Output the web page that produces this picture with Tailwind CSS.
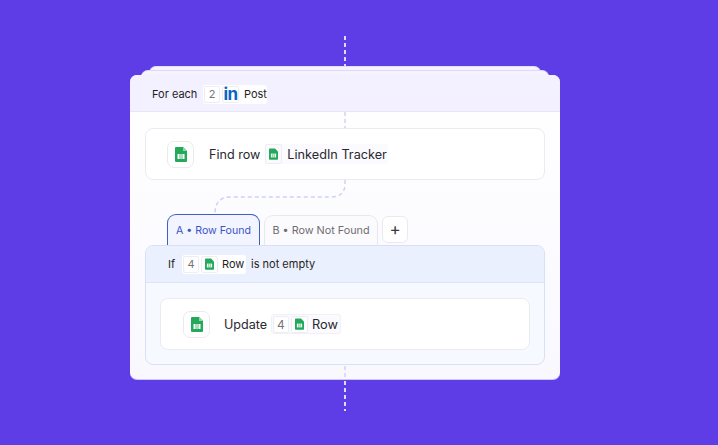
<!DOCTYPE html>
<html>
<head>
<script src="https://cdn.jsdelivr.net/npm/@tailwindcss/browser@4"></script>
</head>
<body class="m-0">
<div class="relative w-[718px] h-[445px] overflow-hidden bg-[#5f3de6] font-['Inter','Noto_Sans',sans-serif] text-[#1f1e24]">
  <svg class="absolute left-0 top-0 z-10" width="718" height="445" fill="none">
    <path d="M345 36V66" stroke="#dcdbfa" stroke-width="2" stroke-dasharray="4 3"/>
    <path d="M345 112V128" stroke="#cfd4f4" stroke-width="1.5" stroke-dasharray="4 3"/>
    <path d="M345 180V184Q345 197 331 197H230Q215 197 215 214" stroke="#cdd3f2" stroke-width="1.5" stroke-dasharray="4 3"/>
    <path d="M345 366V380" stroke="#cfd4f4" stroke-width="1.5" stroke-dasharray="4 3"/>
    <path d="M345 381V411" stroke="#dcdbfa" stroke-width="2" stroke-dasharray="4 3"/>
  </svg>
  <div class="absolute left-[149px] top-[66px] w-[392px] h-[20px] rounded-t-[7px] bg-[#f6f3ff] border-t border-[#e4dcfb]"></div>
  <div class="absolute left-[141px] top-[70px] w-[408px] h-[20px] rounded-t-[7px] bg-[#f6f3ff] border-t border-[#e0d8fa]"></div>
  <div class="absolute left-[130px] top-[75px] w-[430px] h-[305px] rounded-[7px] bg-gradient-to-b from-white to-[#f9f8ff] overflow-hidden flex flex-col border-b border-[#cfc6f5]">
    <div class="h-[37px] shrink-0 bg-[#f3f0ff] border-b border-[#e8e4fa] flex items-center pl-[22px] pt-[2px] text-[11px]">
      <span class="w-[51px]">For each</span>
      <span class="h-[19px] w-[64px] rounded-[3px] bg-white flex items-center pl-[1px]">
        <span class="w-[16px] h-[17px] border border-[#eeeef2] rounded-[2px] text-center text-[#77737a] leading-[15px]">2</span>
        <span class="w-[17px] h-[17px] ml-[2px] flex items-center justify-center rounded-[2px] border border-[#eeeef2] text-[#0a66c2] font-bold text-[17px] leading-none tracking-[-0.5px]">in</span>
        <span class="ml-[5px]">Post</span>
      </span>
    </div>
    <div class="flex flex-col px-[15px] pt-[16px]">
      <div class="h-[52px] rounded-[8px] bg-white border border-[#ebeaf0] flex items-center pl-[21px] shrink-0">
        <span class="w-[27px] h-[27px] rounded-[7px] border border-[#ecebe8] flex items-center justify-center">
          <svg width="12" height="15" viewBox="0 0 12 15"><path d="M1 0H8L12 4V14Q12 15 11 15H1Q0 15 0 14V1Q0 0 1 0Z" fill="#24a85a"/><path d="M8 0L12 4H8Z" fill="#8fd8a8"/><rect x="2.5" y="7" width="7" height="5" fill="#fff"/><path d="M5 7V12M7 7V12" stroke="#24a85a" stroke-width=".8"/></svg>
        </span>
        <span class="ml-[15px] pt-[2px] text-[12.6px] text-[#2a292f]">Find row</span>
        <span class="ml-[5px] h-[20px] w-[123px] rounded-[3px] bg-[#fafaff] flex items-center">
          <span class="w-[17px] h-[20px] rounded-[2px] border border-[#eeeef2] flex items-center justify-center">
            <svg width="9" height="12" viewBox="0 0 12 15"><path d="M1 0H8L12 4V14Q12 15 11 15H1Q0 15 0 14V1Q0 0 1 0Z" fill="#24a85a"/><rect x="2.5" y="7" width="7" height="5" fill="#fff"/><path d="M5 7V12M7 7V12" stroke="#24a85a" stroke-width=".8"/></svg>
          </span>
          <span class="ml-[5px] pt-[2px] text-[12.7px] text-[#2a292f]">LinkedIn Tracker</span>
        </span>
      </div>
      <div class="mt-[34px] h-[31px] pl-[22px] flex items-end gap-[4px] shrink-0">
        <span class="w-[93px] h-[31px] pt-[2px] rounded-t-[9px] border border-b-0 border-[#3f5fc8] bg-[#f2f4ff] text-[#3a55c4] text-[10.6px] flex items-center justify-center">A • Row Found</span>
        <span class="w-[114px] h-[30px] pt-[2px] rounded-t-[9px] border border-b-0 border-[#e8e7f0] bg-[#fbfbfe] text-[#6f6c72] text-[10.8px] flex items-center justify-center">B • Row Not Found</span>
        <span class="w-[26px] h-[27px] mb-[2px] rounded-[6px] border border-[#ebe9ef] bg-white text-[#3a393f] text-[17px] leading-none flex items-center justify-center">+</span>
      </div>
      <div class="h-[120px] rounded-[8px] border border-[#d9e0f4] bg-[#f6f9ff] flex flex-col overflow-hidden shrink-0">
        <div class="h-[37px] shrink-0 bg-[#ebf0fe] border-b border-[#dde4f7] flex items-center pl-[22px] text-[11px]">
          <span class="w-[14px]">If</span>
          <span class="h-[19px] w-[64px] rounded-[3px] bg-white flex items-center pl-[1px]">
            <span class="w-[16px] h-[17px] border border-[#eeeef2] rounded-[2px] text-center text-[#77737a] leading-[15px]">4</span>
            <span class="w-[17px] h-[17px] ml-[2px] flex items-center justify-center rounded-[2px] border border-[#eeeef2]">
              <svg width="9" height="12" viewBox="0 0 12 15"><path d="M1 0H8L12 4V14Q12 15 11 15H1Q0 15 0 14V1Q0 0 1 0Z" fill="#24a85a"/><rect x="2.5" y="7" width="7" height="5" fill="#fff"/><path d="M5 7V12M7 7V12" stroke="#24a85a" stroke-width=".8"/></svg>
            </span>
            <span class="ml-[4px] pt-[1px]">Row</span>
          </span>
          <span class="ml-[5px] pt-[1px]">is not empty</span>
        </div>
        <div class="px-[14px] pt-[15px]">
          <div class="h-[52px] rounded-[8px] bg-white border border-[#ebeaf0] flex items-center pl-[22px]">
            <span class="w-[27px] h-[27px] rounded-[7px] border border-[#ecebe8] flex items-center justify-center">
              <svg width="12" height="15" viewBox="0 0 12 15"><path d="M1 0H8L12 4V14Q12 15 11 15H1Q0 15 0 14V1Q0 0 1 0Z" fill="#24a85a"/><path d="M8 0L12 4H8Z" fill="#8fd8a8"/><rect x="2.5" y="7" width="7" height="5" fill="#fff"/><path d="M5 7V12M7 7V12" stroke="#24a85a" stroke-width=".8"/></svg>
            </span>
            <span class="ml-[14px] w-[47px] pt-[2px] text-[12.6px] text-[#2a292f]">Update</span>
            <span class="h-[20px] w-[70px] rounded-[3px] bg-[#fafaff] border border-[#f0f0f6] flex items-center pl-[1px]">
              <span class="w-[16px] h-[17px] border border-[#eeeef2] bg-white rounded-[2px] text-center text-[12px] text-[#77737a] leading-[15px]">4</span>
              <span class="w-[17px] h-[17px] ml-[2px] flex items-center justify-center rounded-[2px] border border-[#eeeef2] bg-white">
                <svg width="9" height="12" viewBox="0 0 12 15"><path d="M1 0H8L12 4V14Q12 15 11 15H1Q0 15 0 14V1Q0 0 1 0Z" fill="#24a85a"/><rect x="2.5" y="7" width="7" height="5" fill="#fff"/><path d="M5 7V12M7 7V12" stroke="#24a85a" stroke-width=".8"/></svg>
              </span>
              <span class="ml-[4px] pt-[1px] text-[12.8px] text-[#2a292f]">Row</span>
            </span>
          </div>
        </div>
      </div>
    </div>
  </div>
</div>
</body>
</html>
